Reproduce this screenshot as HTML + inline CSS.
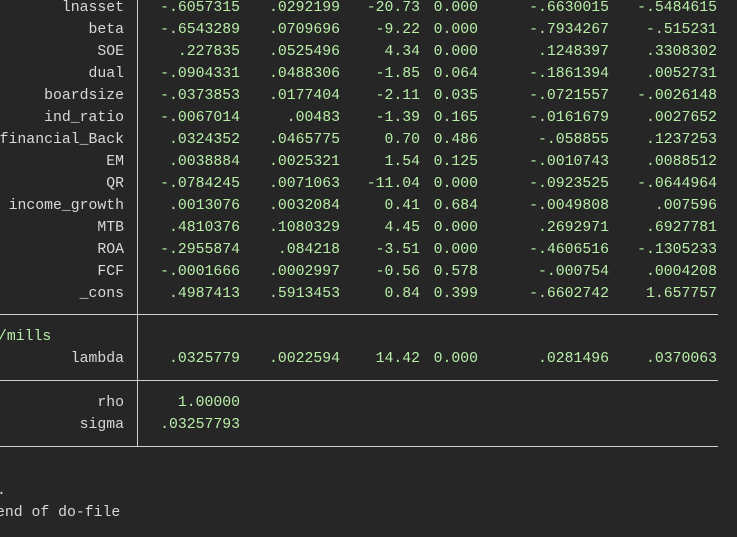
<!DOCTYPE html>
<html><head><style>
html,body{margin:0;padding:0;background:#262626;width:737px;height:537px;overflow:hidden}
body{position:relative;font-family:"Liberation Mono",monospace;font-size:14.8px;color:#d8d8d8}
.r{position:absolute;left:0;width:737px;height:22px;line-height:22px}
.r span{position:absolute;top:0;text-align:right;white-space:pre}
.l{right:613px}
.g{color:#b8eea8}
.c1{right:497px}.c2{right:397px}.c3{right:317px}.c4{right:259px}.c5{right:128px}.c6{right:20px}
.vl{position:absolute;left:137px;width:1px;background:#cfcfcf}
.hl{position:absolute;left:0;width:718px;height:1px;background:#cfcfcf}
</style></head><body>
<div class="vl" style="top:0;height:447px"></div>
<div class="hl" style="top:314px"></div>
<div class="hl" style="top:380px"></div>
<div class="hl" style="top:446px"></div>

<div class="r" style="top:-3px"><span class="l">lnasset</span><span class="g c1">-.6057315</span><span class="g c2">.0292199</span><span class="g c3">-20.73</span><span class="g c4">0.000</span><span class="g c5">-.6630015</span><span class="g c6">-.5484615</span></div>
<div class="r" style="top:19px"><span class="l">beta</span><span class="g c1">-.6543289</span><span class="g c2">.0709696</span><span class="g c3">-9.22</span><span class="g c4">0.000</span><span class="g c5">-.7934267</span><span class="g c6">-.515231</span></div>
<div class="r" style="top:41px"><span class="l">SOE</span><span class="g c1">.227835</span><span class="g c2">.0525496</span><span class="g c3">4.34</span><span class="g c4">0.000</span><span class="g c5">.1248397</span><span class="g c6">.3308302</span></div>
<div class="r" style="top:63px"><span class="l">dual</span><span class="g c1">-.0904331</span><span class="g c2">.0488306</span><span class="g c3">-1.85</span><span class="g c4">0.064</span><span class="g c5">-.1861394</span><span class="g c6">.0052731</span></div>
<div class="r" style="top:85px"><span class="l">boardsize</span><span class="g c1">-.0373853</span><span class="g c2">.0177404</span><span class="g c3">-2.11</span><span class="g c4">0.035</span><span class="g c5">-.0721557</span><span class="g c6">-.0026148</span></div>
<div class="r" style="top:107px"><span class="l">ind_ratio</span><span class="g c1">-.0067014</span><span class="g c2">.00483</span><span class="g c3">-1.39</span><span class="g c4">0.165</span><span class="g c5">-.0161679</span><span class="g c6">.0027652</span></div>
<div class="r" style="top:129px"><span class="l">financial_Back</span><span class="g c1">.0324352</span><span class="g c2">.0465775</span><span class="g c3">0.70</span><span class="g c4">0.486</span><span class="g c5">-.058855</span><span class="g c6">.1237253</span></div>
<div class="r" style="top:151px"><span class="l">EM</span><span class="g c1">.0038884</span><span class="g c2">.0025321</span><span class="g c3">1.54</span><span class="g c4">0.125</span><span class="g c5">-.0010743</span><span class="g c6">.0088512</span></div>
<div class="r" style="top:173px"><span class="l">QR</span><span class="g c1">-.0784245</span><span class="g c2">.0071063</span><span class="g c3">-11.04</span><span class="g c4">0.000</span><span class="g c5">-.0923525</span><span class="g c6">-.0644964</span></div>
<div class="r" style="top:195px"><span class="l">income_growth</span><span class="g c1">.0013076</span><span class="g c2">.0032084</span><span class="g c3">0.41</span><span class="g c4">0.684</span><span class="g c5">-.0049808</span><span class="g c6">.007596</span></div>
<div class="r" style="top:217px"><span class="l">MTB</span><span class="g c1">.4810376</span><span class="g c2">.1080329</span><span class="g c3">4.45</span><span class="g c4">0.000</span><span class="g c5">.2692971</span><span class="g c6">.6927781</span></div>
<div class="r" style="top:239px"><span class="l">ROA</span><span class="g c1">-.2955874</span><span class="g c2">.084218</span><span class="g c3">-3.51</span><span class="g c4">0.000</span><span class="g c5">-.4606516</span><span class="g c6">-.1305233</span></div>
<div class="r" style="top:261px"><span class="l">FCF</span><span class="g c1">-.0001666</span><span class="g c2">.0002997</span><span class="g c3">-0.56</span><span class="g c4">0.578</span><span class="g c5">-.000754</span><span class="g c6">.0004208</span></div>
<div class="r" style="top:283px"><span class="l">_cons</span><span class="g c1">.4987413</span><span class="g c2">.5913453</span><span class="g c3">0.84</span><span class="g c4">0.399</span><span class="g c5">-.6602742</span><span class="g c6">1.657757</span></div>

<div class="r" style="top:326px"><span class="g" style="left:-2px;text-align:left">/mills</span></div>
<div class="r" style="top:348px"><span class="l">lambda</span><span class="g c1">.0325779</span><span class="g c2">.0022594</span><span class="g c3">14.42</span><span class="g c4">0.000</span><span class="g c5">.0281496</span><span class="g c6">.0370063</span></div>

<div class="r" style="top:392px"><span class="l">rho</span><span class="g c1">1.00000</span></div>
<div class="r" style="top:414px"><span class="l">sigma</span><span class="g c1">.03257793</span></div>

<div class="r" style="top:480px"><span style="left:-3px;text-align:left">.</span></div>
<div class="r" style="top:502px"><span style="left:-4px;text-align:left">end of do-file</span></div>
</body></html>
